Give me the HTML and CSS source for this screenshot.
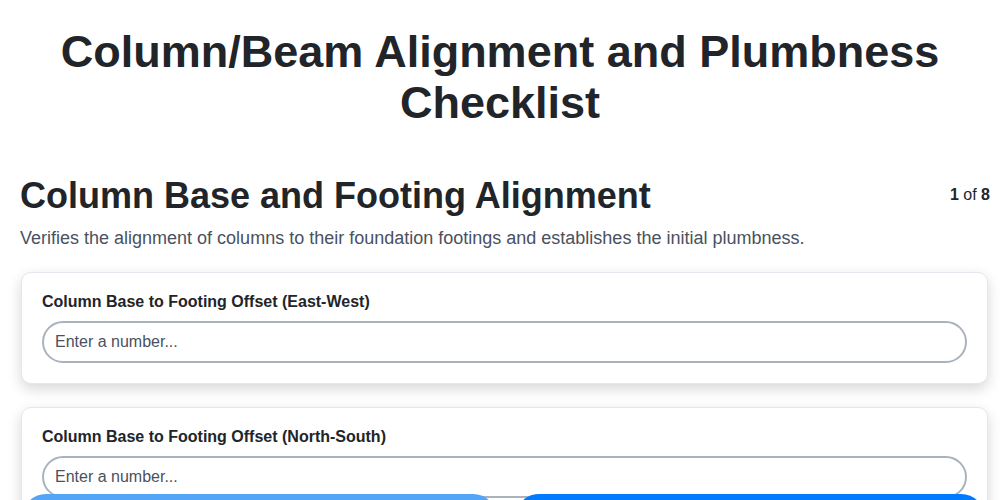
FILE: index.html
```html
<!DOCTYPE html>
<html lang="en">
<head>
<meta charset="utf-8">
<title>Column/Beam Alignment and Plumbness Checklist</title>
<link rel="stylesheet" href="styles.css">
</head>
<body>
<div class="page">
  <h1 class="title">Column/Beam Alignment and Plumbness Checklist</h1>
  <section class="section">
    <div class="section-head">
      <h2 class="section-title">Column Base and Footing Alignment</h2>
      <div class="progress"><b>1</b> of <b>8</b></div>
    </div>
    <p class="section-desc">Verifies the alignment of columns to their foundation footings and establishes the initial plumbness.</p>
    <div class="card">
      <label class="field-label">Column Base to Footing Offset (East-West)</label>
      <input class="field-input" type="text" placeholder="Enter a number...">
    </div>
    <div class="card">
      <label class="field-label">Column Base to Footing Offset (North-South)</label>
      <input class="field-input" type="text" placeholder="Enter a number...">
    </div>
  </section>
</div>
<div class="nav">
  <button class="btn btn-prev">Previous</button>
  <button class="btn btn-next">Next</button>
</div>
</body>
</html>
```
FILE: styles.css
```css
* { box-sizing: border-box; }
html, body { margin: 0; padding: 0; background: #fff; }
body {
  font-family: "Liberation Sans", Arial, sans-serif;
  color: #1f2328;
}
.page {
  padding: 26px 10px 40px 20px;
}
.title {
  margin: 0 0 0 -10px;
  text-align: center;
  font-size: 45px;
  line-height: 51px;
  font-weight: 700;
  color: #212529;
}
.section { margin-top: 46px; }
.section-head {
  display: flex;
  justify-content: space-between;
  align-items: flex-start;
}
.section-title {
  margin: 0;
  font-size: 36px;
  line-height: 43px;
  font-weight: 700;
  color: #212529;
}
.progress {
  font-size: 16px;
  margin-top: 12px;
  color: #212529;
}
.section-desc {
  margin: 9px 0 22px 0;
  font-size: 18px;
  line-height: 24px;
  color: #4a5160;
}
.card {
  background: #fff;
  border: 1px solid #e6e6ee;
  border-radius: 10px;
  box-shadow: 0 5px 14px rgba(0, 0, 0, 0.16);
  padding: 20px;
  margin: 0 2px 23px 1px;
}
.field-label {
  display: block;
  font-size: 16px;
  font-weight: 700;
  line-height: 18px;
  color: #212529;
  margin-bottom: 10px;
}
.field-input {
  display: block;
  width: 100%;
  height: 42px;
  border: 2px solid #aab3bd;
  border-radius: 21px;
  padding: 0 11px;
  font-family: "Liberation Sans", Arial, sans-serif;
  font-size: 16px;
  background: #fff;
  color: #212529;
}
.field-input::placeholder { color: #4a5160; }
.nav {
  position: fixed;
  left: 22px;
  right: 15px;
  top: 494px;
  display: flex;
  gap: 18px;
}
.btn {
  height: 48px;
  border: none;
  border-radius: 24px;
  color: #fff;
  font-family: "Liberation Sans", Arial, sans-serif;
  font-size: 16px;
  font-weight: 700;
}
.btn-prev { width: 475px; background: #52a5f7; }
.btn-next { flex: 1; background: #007bff; }
```
